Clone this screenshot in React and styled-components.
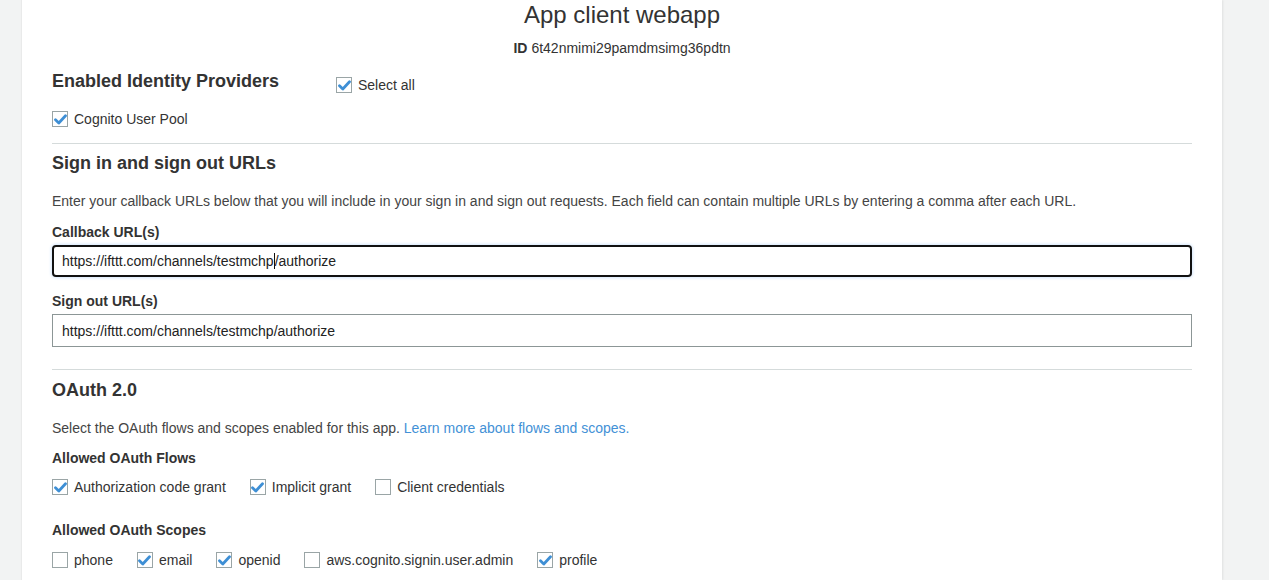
import React from "react";
import styled, { createGlobalStyle } from "styled-components";

const Global = createGlobalStyle`
  body {
    margin: 0;
    background: #f2f3f3;
    font-family: "Liberation Sans", Arial, sans-serif;
    color: #333;
  }
`;

const Page = styled.div`
  display: flex;
  padding-left: 22px;
  height: 580px;
  overflow: hidden;
`;

const Card = styled.div`
  width: 1140px;
  padding: 0 30px;
  background: #fff;
  box-shadow: 1px 0 2px rgba(0, 0, 0, 0.08), -1px 0 1px rgba(0, 0, 0, 0.03);
`;

const Title = styled.h1`
  margin: 1px 0 0;
  text-align: center;
  font-size: 24px;
  font-weight: normal;
  line-height: 28px;
  color: #333;
`;

const ClientId = styled.div`
  margin-top: 11px;
  text-align: center;
  font-size: 14px;
  line-height: 16px;
  color: #333;

  b {
    margin-right: 4px;
  }
`;

const ProvidersHead = styled.div`
  display: flex;
  align-items: flex-end;
  margin-top: 13px;
  height: 24px;
`;

const SectionTitle = styled.h2`
  margin: ${(p) => p.$top || 0}px 0 0;
  font-size: 18px;
  font-weight: bold;
  line-height: 24px;
  color: #333;
  width: ${(p) => (p.$width ? `${p.$width}px` : "auto")};
`;

const Row = styled.div`
  display: flex;
  align-items: center;
  gap: 24px;
  margin-top: ${(p) => p.$top || 0}px;
  height: 18px;
`;

const Check = styled.label`
  display: flex;
  align-items: center;
  gap: 6px;
  font-size: 14px;
  color: #333;
  line-height: 16px;
`;

const Box = styled.span`
  width: 14px;
  height: 14px;
  border: 1px solid #9aa5a6;
  background: #fff;
  display: flex;
  align-items: center;
  justify-content: center;
  flex: none;
`;

const Rule = styled.hr`
  margin: ${(p) => p.$top}px 0 0;
  border: 0;
  border-top: 1px solid #d5dbdb;
`;

const Text = styled.p`
  margin: ${(p) => p.$top}px 0 0;
  font-size: 14px;
  line-height: 18px;
  color: #444;

  a {
    color: #4391d6;
    text-decoration: none;
  }
`;

const FieldLabel = styled.div`
  margin-top: ${(p) => p.$top}px;
  font-size: 14px;
  font-weight: bold;
  line-height: 16px;
  color: #333;
`;

const Input = styled.div`
  margin-top: ${(p) => p.$top}px;
  height: ${(p) => (p.$focus ? 28 : 31)}px;
  display: flex;
  align-items: center;
  padding: 0 ${(p) => (p.$focus ? 8 : 9)}px;
  font-size: 14px;
  color: #222;
  border: ${(p) => (p.$focus ? "2px solid #111" : "1px solid #8c9696")};
  border-radius: ${(p) => (p.$focus ? 4 : 0)}px;
  box-shadow: ${(p) => (p.$focus ? "0 0 3px 1px #d4e6fb" : "none")};
`;

const Caret = styled.span`
  display: inline-block;
  width: 1px;
  height: 16px;
  background: #111;
  vertical-align: -3px;
`;

const Tick = () => (
  <svg width="13" height="11" viewBox="0 0 13 11">
    <path d="M1.5 5.8 L4.8 9 L11.5 1.8" fill="none" stroke="#3e8fd5" strokeWidth="2.8" strokeLinecap="round" strokeLinejoin="round" />
  </svg>
);

const CheckItem = ({ checked, children }) => (
  <Check>
    <Box>{checked && <Tick />}</Box>
    {children}
  </Check>
);

const flows = [
  { label: "Authorization code grant", checked: true },
  { label: "Implicit grant", checked: true },
  { label: "Client credentials", checked: false },
];

const scopes = [
  { label: "phone", checked: false },
  { label: "email", checked: true },
  { label: "openid", checked: true },
  { label: "aws.cognito.signin.user.admin", checked: false },
  { label: "profile", checked: true },
];

export default function App() {
  return (
    <>
      <Global />
      <Page>
        <Card>
          <Title>App client webapp</Title>
          <ClientId>
            <b>ID</b>6t42nmimi29pamdmsimg36pdtn
          </ClientId>

          <ProvidersHead>
            <SectionTitle $width={284}>Enabled Identity Providers</SectionTitle>
            <CheckItem checked>Select all</CheckItem>
          </ProvidersHead>
          <Row $top={17}>
            <CheckItem checked>Cognito User Pool</CheckItem>
          </Row>

          <Rule $top={15} />
          <SectionTitle $top={7}>Sign in and sign out URLs</SectionTitle>
          <Text $top={17}>
            Enter your callback URLs below that you will include in your sign in and sign out requests. Each field can contain multiple URLs by entering a comma after each URL.
          </Text>
          <FieldLabel $top={14}>Callback URL(s)</FieldLabel>
          <Input $focus $top={5}>
            https://ifttt.com/channels/testmchp
            <Caret />
            /authorize
          </Input>
          <FieldLabel $top={16}>Sign out URL(s)</FieldLabel>
          <Input $top={5}>https://ifttt.com/channels/testmchp/authorize</Input>

          <Rule $top={22} />
          <SectionTitle $top={8}>OAuth 2.0</SectionTitle>
          <Text $top={17}>
            Select the OAuth flows and scopes enabled for this app.{" "}
            <a href="#">Learn more about flows and scopes.</a>
          </Text>
          <FieldLabel $top={13}>Allowed OAuth Flows</FieldLabel>
          <Row $top={12}>
            {flows.map((f) => (
              <CheckItem key={f.label} checked={f.checked}>
                {f.label}
              </CheckItem>
            ))}
          </Row>
          <FieldLabel $top={26}>Allowed OAuth Scopes</FieldLabel>
          <Row $top={13}>
            {scopes.map((s) => (
              <CheckItem key={s.label} checked={s.checked}>
                {s.label}
              </CheckItem>
            ))}
          </Row>
        </Card>
      </Page>
    </>
  );
}
